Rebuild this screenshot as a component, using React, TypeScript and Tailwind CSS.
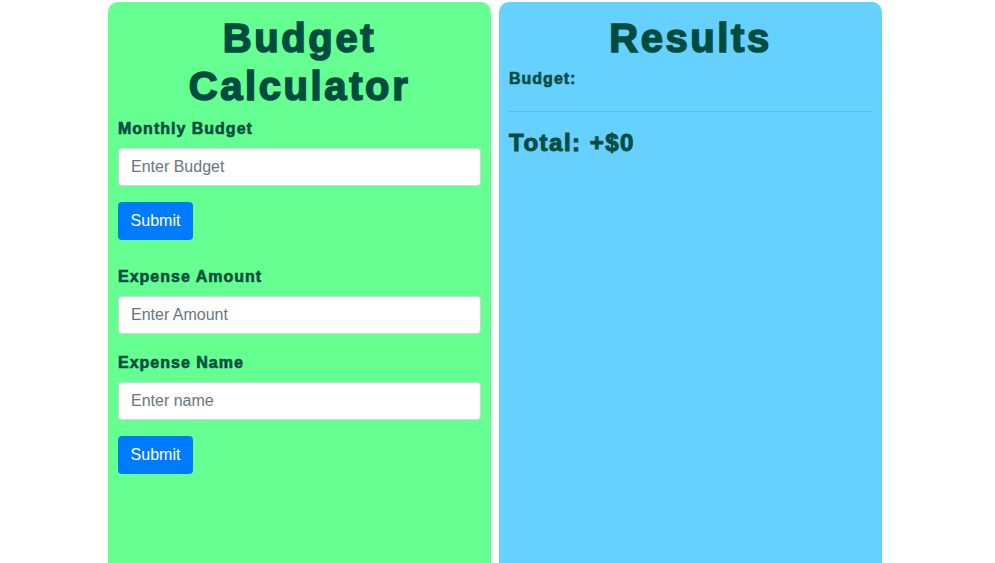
import React from "react";

const heavy = "[font-family:'Liberation_Sans',Arial,sans-serif] font-bold";

function Label({ children }: { children: React.ReactNode }) {
  return (
    <label
      className={`${heavy} block text-[16px] leading-[24px] tracking-[1px] text-[#004d40] [-webkit-text-stroke:0.6px_#004d40] pt-[2px] mb-[7px]`}
    >
      {children}
    </label>
  );
}

function Input({ placeholder }: { placeholder: string }) {
  return (
    <input
      placeholder={placeholder}
      className="block w-full h-[38px] bg-white border border-[#cfd4d8] rounded-[4px] px-[12px] text-[16px] [font-family:'Liberation_Sans',Arial,sans-serif] text-[#333] placeholder:text-[#6c757d] outline-none"
    />
  );
}

function Button() {
  return (
    <button className="h-[38px] w-[75px] rounded-[4px] bg-[#007bff] text-white text-[16px] [font-family:'Liberation_Sans',Arial,sans-serif]">
      Submit
    </button>
  );
}

export default function App() {
  return (
    <div className="h-screen overflow-hidden bg-white flex justify-center gap-[8px] pt-[2px] pr-[5px]">
      <div className="w-[383px] h-full bg-[#66ff92] rounded-t-[10px] px-[10px]">
        <h1
          className={`${heavy} text-center text-[40px] leading-[48px] tracking-[2.6px] text-[#004d40] [-webkit-text-stroke:1.6px_#004d40] mt-[12px]`}
        >
          Budget
          <br />
          Calculator
        </h1>
        <div className="mt-[5px]">
          <Label>Monthly Budget</Label>
          <Input placeholder="Enter Budget" />
          <div className="mt-[16px]">
            <Button />
          </div>
        </div>
        <div className="mt-[23px]">
          <Label>Expense Amount</Label>
          <Input placeholder="Enter Amount" />
          <div className="mt-[15px]">
            <Label>Expense Name</Label>
          </div>
          <Input placeholder="Enter name" />
          <div className="mt-[16px]">
            <Button />
          </div>
        </div>
      </div>
      <div className="w-[383px] h-full bg-[#66d1ff] rounded-t-[10px] px-[10px]">
        <h1
          className={`${heavy} text-center text-[40px] leading-[48px] tracking-[2.6px] text-[#004d40] [-webkit-text-stroke:1.6px_#004d40] mt-[12px]`}
        >
          Results
        </h1>
        <div
          className={`${heavy} mt-[5px] text-[16px] leading-[24px] tracking-[1px] text-[#004d40] [-webkit-text-stroke:0.6px_#004d40]`}
        >
          Budget:
        </div>
        <div className="mt-[20px] h-px bg-[#55bde6]" />
        <div
          className={`${heavy} mt-[15px] text-[24px] leading-[32px] tracking-[1.5px] text-[#004d40] [-webkit-text-stroke:1px_#004d40]`}
        >
          Total: +$0
        </div>
      </div>
    </div>
  );
}
